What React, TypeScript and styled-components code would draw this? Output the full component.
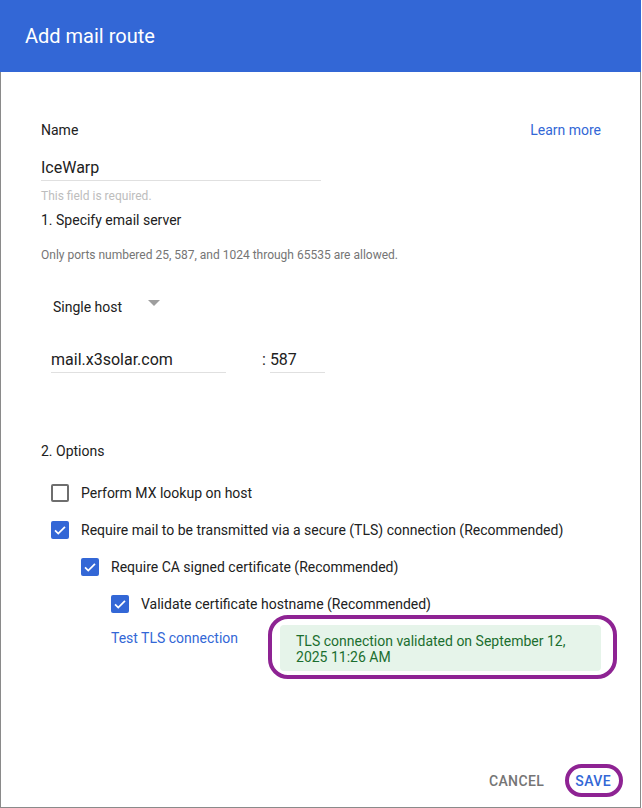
import * as React from 'react';
import styled, { createGlobalStyle } from 'styled-components';

const GlobalStyle = createGlobalStyle`
  body {
    margin: 0;
    background: #fff;
    font-family: Roboto, 'Liberation Sans', Arial, sans-serif;
    color: #212121;
  }
`;

const BLUE = '#3367d6';
const RING = '#8e2393';

const Dialog = styled.div`
  width: 641px;
  height: 808px;
  box-sizing: border-box;
  border: 1px solid #8a8a8a;
  border-top: none;
  display: flex;
  flex-direction: column;
  background: #fff;
`;

const Header = styled.header`
  height: 72px;
  flex: none;
  background: ${BLUE};
  margin: 0 -1px;
  padding-left: 25px;
  display: flex;
  align-items: center;
  color: #fff;
  font-size: 20px;
  font-weight: 400;
`;

const Body = styled.div`
  flex: 1;
  padding: 48px 39px 0 40px;
  display: flex;
  flex-direction: column;
`;

const TopRow = styled.div`
  display: flex;
  justify-content: space-between;
  align-items: center;
  height: 20px;
  font-size: 14px;
`;

const Label = styled.div<{ $mt?: number }>`
  font-size: 14px;
  line-height: 20px;
  margin-top: ${p => p.$mt ?? 0}px;
`;

const Link = styled.a`
  color: ${BLUE};
  font-size: 14px;
  text-decoration: none;
  cursor: pointer;
`;

const Field = styled.div<{ $w: number; $mt?: number }>`
  width: ${p => p.$w}px;
  margin-top: ${p => p.$mt ?? 0}px;
  border-bottom: 1px solid #e0e0e0;
  padding-bottom: 2px;
  font-size: 16px;
  line-height: 20px;
`;

const Hint = styled.div<{ $mt: number; $light?: boolean }>`
  font-size: 12px;
  line-height: 16px;
  margin-top: ${p => p.$mt}px;
  color: ${p => (p.$light ? '#bdbdbd' : '#757575')};
`;

const Select = styled.div`
  margin: 34px 0 0 12px;
  display: flex;
  align-items: center;
  font-size: 14px;
  line-height: 20px;
`;

const Caret = styled.span`
  margin-left: 26px;
  margin-top: -8px;
  width: 0;
  height: 0;
  border-left: 6px solid transparent;
  border-right: 6px solid transparent;
  border-top: 6px solid #9e9e9e;
`;

const HostRow = styled.div`
  margin: 33px 0 0 10px;
  display: flex;
  align-items: flex-start;
`;

const Colon = styled.span`
  font-size: 16px;
  line-height: 20px;
  margin: 0 4px 0 36px;
`;

const Options = styled.div`
  margin-top: 22px;
  display: flex;
  flex-direction: column;
  gap: 17px;
`;

const OptionRow = styled.label<{ $level: number }>`
  display: flex;
  align-items: center;
  height: 20px;
  margin-left: ${p => 10 + p.$level * 30}px;
  font-size: 14px;
  gap: 12px;
`;

const Box = styled.span<{ $checked: boolean }>`
  width: 18px;
  height: 18px;
  box-sizing: border-box;
  border-radius: 2px;
  flex: none;
  display: flex;
  align-items: center;
  justify-content: center;
  background: ${p => (p.$checked ? BLUE : '#fff')};
  border: ${p => (p.$checked ? 'none' : '2px solid #6e6e6e')};
`;

const TestRow = styled.div`
  margin: 11px 0 0 70px;
  display: flex;
  align-items: flex-start;
`;

const TestLink = styled(Link)`
  line-height: 20px;
  margin-top: 3px;
`;

const Status = styled.div`
  position: relative;
  margin-left: 42px;
  width: 321px;
  box-sizing: border-box;
  padding: 8px 16px 6px;
  background: #e6f4ea;
  border-radius: 4px;
  color: #1b6e2f;
  font-size: 14px;
  line-height: 16px;
`;

const Ring = styled.span`
  position: absolute;
  top: -10px;
  left: -12px;
  right: -16px;
  bottom: -8px;
  border: 4px solid ${RING};
  border-radius: 20px;
  pointer-events: none;
`;

const Footer = styled.div`
  display: flex;
  justify-content: flex-end;
  align-items: center;
  gap: 31px;
  padding: 0 29px 16px 0;
`;

const Button = styled.button<{ $primary?: boolean }>`
  position: relative;
  background: none;
  border: none;
  padding: 0;
  font-family: inherit;
  font-size: 14px;
  font-weight: 500;
  line-height: 20px;
  letter-spacing: 0.4px;
  color: ${p => (p.$primary ? BLUE : '#757575')};
  cursor: pointer;
`;

const ButtonRing = styled.span`
  position: absolute;
  top: -7px;
  bottom: -6px;
  left: -10px;
  right: -12px;
  border: 4px solid ${RING};
  border-radius: 18px;
`;

const Check = () => (
  <svg width="14" height="14" viewBox="0 0 24 24">
    <path d="M3.5 12.5l5.5 5.5L20.5 6.5" fill="none" stroke="#fff" strokeWidth="3" />
  </svg>
);

const options = [
  { label: 'Perform MX lookup on host', level: 0, checked: false },
  { label: 'Require mail to be transmitted via a secure (TLS) connection (Recommended)', level: 0, checked: true },
  { label: 'Require CA signed certificate (Recommended)', level: 1, checked: true },
  { label: 'Validate certificate hostname (Recommended)', level: 2, checked: true },
];

export default function App() {
  return (
    <>
      <GlobalStyle />
      <Dialog>
        <Header>Add mail route</Header>
        <Body>
          <TopRow>
            <span>Name</span>
            <Link>Learn more</Link>
          </TopRow>
          <Field $w={280} $mt={18}>IceWarp</Field>
          <Hint $mt={7} $light>This field is required.</Hint>
          <Label $mt={6}>1. Specify email server</Label>
          <Hint $mt={17}>Only ports numbered 25, 587, and 1024 through 65535 are allowed.</Hint>
          <Select>
            Single host
            <Caret />
          </Select>
          <HostRow>
            <Field $w={175}>mail.x3solar.com</Field>
            <Colon>:</Colon>
            <Field $w={55}>587</Field>
          </HostRow>
          <Label $mt={68}>2. Options</Label>
          <Options>
            {options.map(o => (
              <OptionRow key={o.label} $level={o.level}>
                <Box $checked={o.checked}>{o.checked && <Check />}</Box>
                {o.label}
              </OptionRow>
            ))}
          </Options>
          <TestRow>
            <TestLink>Test TLS connection</TestLink>
            <Status>
              TLS connection validated on September 12, 2025 11:26 AM
              <Ring />
            </Status>
          </TestRow>
        </Body>
        <Footer>
          <Button>CANCEL</Button>
          <Button $primary>
            SAVE
            <ButtonRing />
          </Button>
        </Footer>
      </Dialog>
    </>
  );
}
